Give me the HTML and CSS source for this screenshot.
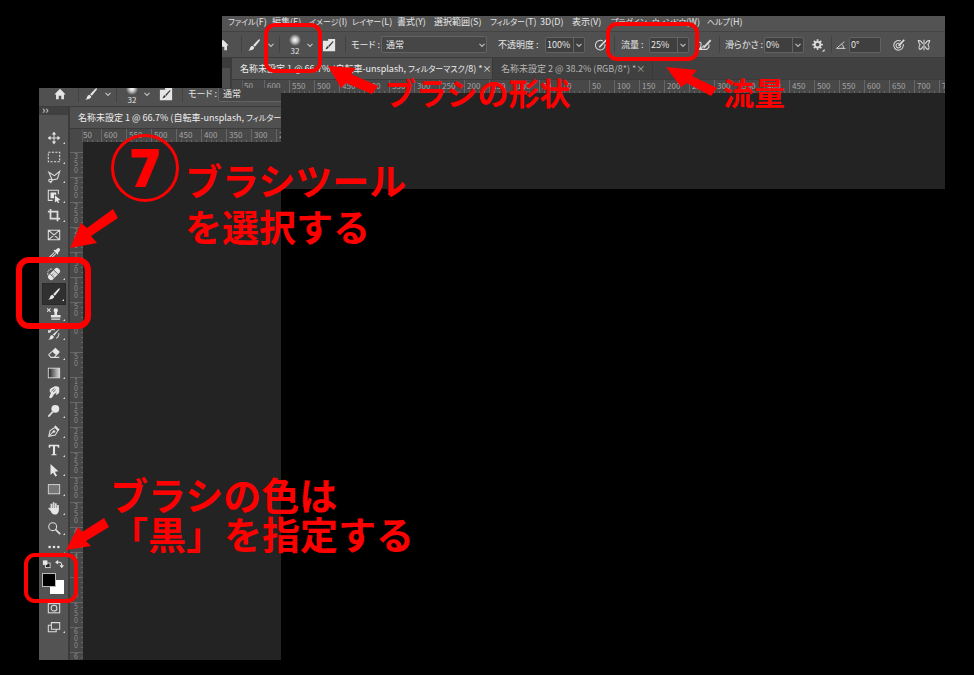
FILE: index.html
```html
<!DOCTYPE html>
<html lang="ja">
<head>
<meta charset="utf-8">
<title>ブラシツールの設定</title>
<link rel="stylesheet" href="styles.css">
</head>
<body>
<svg class="defs" aria-hidden="true">
  <linearGradient id="fade"><stop offset="0" stop-color="#222"/><stop offset="1" stop-color="#ddd"/></linearGradient>
  <radialGradient id="soft"><stop offset="0" stop-color="#fff"/><stop offset=".4" stop-color="#ccc"/><stop offset="1" stop-color="#535353"/></radialGradient>
  <symbol id="home" viewBox="0 0 16 16"><path class="f" d="M8 2 1.500 8.500H3.500V14H6.500V10H9.500V14H12.500V8.500H14.500Z"/></symbol>
  <symbol id="brush" viewBox="0 0 16 16"><path class="f" d="M14.500 1.500Q15.200 2.300 14 3.800L9 10 7 8.200 13 2Q14 1 14.500 1.500ZM6.300 8.800 8.300 10.800Q7.800 14 1.500 14.500 3.200 13 3.500 11.300 4 9 6.300 8.800Z"/></symbol>
  <symbol id="chev" viewBox="0 0 8 8"><path class="s" d="M1.500 2.800 4 5.300 6.500 2.800"/></symbol>
  <symbol id="preset" viewBox="0 0 16 16"><path class="f" d="M1 3H7V1H15V15H1Z"/><path fill="#333" d="M12.500 3.500 13.200 4.300 8.200 10.200 7 9ZM6.500 9.500 7.700 10.800Q6.500 13 3.500 12.800 4.800 12 5 10.800 5.400 9.600 6.500 9.500Z"/></symbol>
  <symbol id="target" viewBox="0 0 16 16"><path class="s" d="M10 3.500A5.500 5.500 0 1 0 12.800 7"/><path class="s" d="M8.500 6.200A2.700 2.700 0 1 0 10 8.500"/><path class="s w" d="M7.500 9 14 2"/></symbol>
  <symbol id="penpress" viewBox="0 0 16 16"><path class="s" d="M10 3.500A5.500 5.500 0 1 0 12.500 7"/><path class="s w" d="M6.500 10 14.500 2"/><path class="f" d="M5.500 11 6.200 8.800 7.800 10.200Z"/></symbol>
  <symbol id="air" viewBox="0 0 16 16"><path class="s" d="M1.500 5Q4 4.500 3.500 8T1.500 13H4M7 8.500 2.500 13H10L12.500 10.500V7"/><path class="s w" d="M6.500 11 14.500 2.500"/></symbol>
  <symbol id="gear" viewBox="0 0 16 16"><circle class="s w" cx="7.500" cy="7.500" r="3.200"/><path class="s w" d="M7.500 1.500V4M7.500 11V13.500M1.500 7.500H4M11 7.500H13.500M3.300 3.300 5 5M10 10 11.700 11.700M3.300 11.700 5 10M10 5 11.700 3.300"/><path class="f" d="M15.500 12.500V15.500H12.500Z"/></symbol>
  <symbol id="angle" viewBox="0 0 16 16"><path class="s" d="M12.500 3.500 2 12.500H14M9 7Q12 9 11 12.500"/></symbol>
  <symbol id="fly" viewBox="0 0 16 16"><path class="s" d="M8 2V14M6.500 6.500Q4.500 2.500 1.500 3 2 6 3.500 7.500 1.500 9.500 2.500 12.500 5.500 13.500 6.500 9.500M9.500 6.500Q11.500 2.500 14.500 3 14 6 12.500 7.500 14.500 9.500 13.500 12.500 10.500 13.500 9.500 9.500"/></symbol>
  <symbol id="move" viewBox="0 0 16 16"><path class="s" d="M8 2V14M2 8H14"/><path class="f" d="M8 .8 10.500 4H5.500ZM8 15.200 10.500 12H5.500ZM.8 8 4 5.500V10.500ZM15.200 8 12 5.500V10.500Z"/></symbol>
  <symbol id="marquee" viewBox="0 0 16 16"><rect class="s" x="1.500" y="2.500" width="13" height="11" stroke-dasharray="2.500 1.500"/></symbol>
  <symbol id="lasso" viewBox="0 0 16 16"><path class="s" d="M2 2.500 8.500 6.500 14.500 1.500 12 10 6 11.500ZM6 11.500Q2 9.500 2 12T5.500 12.500L4 15"/></symbol>
  <symbol id="object" viewBox="0 0 16 16"><path class="s" d="M6.500 13H1.500V1.500H13V6"/><path class="f" d="M4 4H10.500V7L8 6V10.500H4ZM9 7 15.500 12.500 12.500 13 14 15.500 12.500 16 11 13.800 9 15.500Z"/></symbol>
  <symbol id="crop" viewBox="0 0 16 16"><path class="s w" d="M4 1V12H15M1 4H12V15"/></symbol>
  <symbol id="frame" viewBox="0 0 16 16"><path class="s" d="M1.500 2.500H14.500V13.500H1.500ZM1.500 2.500 14.500 13.500M14.500 2.500 1.500 13.500"/></symbol>
  <symbol id="dropper" viewBox="0 0 16 16"><path class="f" d="M10 3.500 12 1.500Q13.500.800 14.500 2T14.500 4.500L12.500 6.500 13 7.500 12 8.500 7.500 4 8.500 3Z"/><path class="s" d="M8.500 6 3 11.500 2 14 4.500 13 10 7.500"/></symbol>
  <symbol id="heal" viewBox="0 0 16 16"><path class="s" stroke-dasharray="1.500 1" d="M1 9Q0 3 6 2"/><g transform="rotate(-45 8 8)"><rect class="f" x="0" y="4.500" width="16" height="7" rx="3"/><path stroke="#535353" d="M5 4.500V11.500M11 4.500V11.500"/><path stroke="#535353" stroke-dasharray="1 1" d="M6 7H10M6 9H10"/></g></symbol>
  <symbol id="stamp" viewBox="0 0 16 16"><path class="s" d="M0 1.500 4 5.500M4 1.500 0 5.500"/><path class="f" d="M10 1.500A2.500 2.500 0 0 1 11.500 6V9H15.500V12H4.500V9H8.500V6A2.500 2.500 0 0 1 10 1.500ZM5 13H15V14.500H5Z"/></symbol>
  <symbol id="history" viewBox="0 0 16 16"><path class="s" d="M9 3.500Q5 1.500 3 5M13.500 7Q14 11 10.500 13"/><path class="f" d="M1 3 1.500 7 5 5.500ZM15 1.500 8.500 10 6.500 8.500ZM6 9 8 11Q7 14.500 1.500 14.500 3.500 13 3.500 11 4 9 6 9Z"/></symbol>
  <symbol id="eraser" viewBox="0 0 16 16"><path class="f" d="M9.500 2 14.500 6.500 10.500 10.500 5.500 6Z"/><path class="s" d="M5.500 6.500 2 10 4.500 13H8L14 7M8 13H14"/></symbol>
  <symbol id="gradient" viewBox="0 0 16 16"><rect x="1.500" y="2.500" width="13" height="11" fill="url(#fade)" stroke="#ddd"/></symbol>
  <symbol id="smudge" viewBox="0 0 16 16"><path class="f" d="M2.500 14 4.500 9 3 7Q2.500 4.500 5 3.500L9 1.500Q14 1 14 4V8Q13.500 11 10 11.500L11 8.500 8 10.500 6 14Q4 16 2.500 14Z"/><path stroke="#535353" fill="none" d="M5 7 8.500 4M7 8 10 5.500"/></symbol>
  <symbol id="dodge" viewBox="0 0 16 16"><circle class="f" cx="9.500" cy="5.500" r="4.500"/><path class="s w" d="M6.500 9 1.500 14.500"/></symbol>
  <symbol id="pen" viewBox="0 0 16 16"><path class="s" d="M2 14 3.500 7.500 9 4 12.500 7.500 9.500 12.500ZM2 14 7 9"/><circle class="f" cx="8" cy="8.500" r="1.500"/><path class="f" d="M9.500 1.500 14.500 6.500 13 8 8.500 3Z"/></symbol>
  <symbol id="type" viewBox="0 0 16 16"><path class="f" d="M2 2H14V5.500H12.500L12 3.800H9.200V12.500L11 13V14H5V13L6.800 12.500V3.800H4L3.500 5.500H2Z"/></symbol>
  <symbol id="arrow" viewBox="0 0 16 16"><path class="f" d="M4 1 13 9.500 9 10 11.500 14.500 9.500 15.500 7 11 4 13.500Z"/></symbol>
  <symbol id="shape" viewBox="0 0 16 16"><rect x="1.500" y="3" width="13" height="10.500" fill="#777" stroke="#ddd"/></symbol>
  <symbol id="hand" viewBox="0 0 16 16"><path class="s w" d="M5 9V3M7.500 8V1.500M10 8V2.500M12.500 9V4.500M5 11 2 8"/><path class="f" d="M4 8H13.500V11Q12.500 15.500 9 15.500T4.500 12Z"/></symbol>
  <symbol id="loupe" viewBox="0 0 16 16"><circle class="s" cx="6.500" cy="6.500" r="4.500"/><path class="s w" stroke-linecap="round" d="M10 10 14.500 14.500"/></symbol>
  <symbol id="dots" viewBox="0 0 16 16"><circle class="f" cx="3" cy="8" r="1.500"/><circle class="f" cx="8" cy="8" r="1.500"/><circle class="f" cx="13" cy="8" r="1.500"/></symbol>
  <symbol id="mask" viewBox="0 0 16 16"><rect class="s" x="1.500" y="3" width="13" height="10.500"/><circle class="s" cx="8" cy="8.200" r="3.300"/></symbol>
  <symbol id="screen" viewBox="0 0 16 16"><path class="s" d="M5 6H1.500V13.500H10.500V11M5 3H14.500V10.500H5Z"/></symbol>
  <symbol id="mini" viewBox="0 0 10 10"><rect x="4" y="4" width="5" height="5" fill="#222" stroke="#ddd"/><rect class="f" x="1" y="1" width="5" height="5"/></symbol>
  <symbol id="swap" viewBox="0 0 10 10"><path class="s" d="M3 3H5Q7.500 3 7.500 7"/><path class="f" d="M0 3 3.500 .5V5.500ZM5 6.500H10L7.500 9.800Z"/></symbol>
</svg>

<main class="board">
  <section class="panel wide" aria-label="オプションバー">
    <nav class="menu">
      <a href="#"><span class="kana">ファイル</span>(F)</a><a href="#">編集(E)</a><a href="#"><span class="kana">イメージ</span>(I)</a><a href="#"><span class="kana">レイヤー</span>(L)</a><a href="#">書式(Y)</a><a href="#">選択範囲(S)</a><a href="#"><span class="kana">フィルター</span>(T)</a><a href="#">3D(D)</a><a href="#">表示(V)</a><a href="#"><span class="kana">プラグイン</span></a><a href="#"><span class="kana">ウィンドウ</span>(W)</a><a href="#"><span class="kana">ヘルプ</span>(H)</a>
    </nav>
    <div class="options">
      <div class="group g-home"><button aria-label="ホーム"><svg><use href="#home"/></svg></button></div>
      <div class="group g-brush"><button aria-label="ブラシ"><svg><use href="#brush"/></svg></button><svg class="chev"><use href="#chev"/></svg></div>
      <div class="group g-size"><button class="tip" aria-label="ブラシサイズ"><svg viewBox="0 0 14 14"><circle cx="7" cy="7" r="7" fill="url(#soft)"/></svg><span>32</span></button><svg class="chev"><use href="#chev"/></svg><button aria-label="ブラシ設定"><svg><use href="#preset"/></svg></button></div>
      <div class="group g-mode"><label for="mode">モード :</label><span class="pick"><select id="mode"><option>通常</option></select><svg class="chev"><use href="#chev"/></svg></span><label class="opacity" for="opacity">不透明度 :</label><span class="field"><input id="opacity" value="100%"><button aria-label="不透明度を開く"><svg class="chev"><use href="#chev"/></svg></button></span><button aria-label="筆圧で不透明度"><svg><use href="#penpress"/></svg></button></div>
      <div class="group g-flow"><label for="flow">流量 :</label><span class="field"><input id="flow" value="25%"><button aria-label="流量を開く"><svg class="chev"><use href="#chev"/></svg></button></span><button aria-label="エアブラシ"><svg><use href="#air"/></svg></button></div>
      <div class="group g-smooth"><label for="smooth">滑らかさ :</label><span class="field"><input id="smooth" value="0%"><button aria-label="滑らかさを開く"><svg class="chev"><use href="#chev"/></svg></button></span><button aria-label="滑らかさの設定"><svg><use href="#gear"/></svg></button></div>
      <div class="group g-angle"><label for="angle-in" aria-label="角度"><svg class="small"><use href="#angle"/></svg></label><span class="field plain"><input id="angle-in" value="0°"></span><button aria-label="筆圧でサイズ"><svg><use href="#target"/></svg></button><button aria-label="対称"><svg><use href="#fly"/></svg></button></div>
    </div>
    <div class="work">
      <div class="edge"></div>
      <div class="doc">
        <div class="tabs">
          <div class="tab first on"><span>名称未設定 1 @ 66.7% (自転車-unsplash, <span class="kana">フィルターマスク</span>/8) *</span><button aria-label="閉じる">×</button></div>
          <div class="tab"><span>名称未設定 2 @ 38.2% (RGB/8*) *</span><button aria-label="閉じる">×</button></div>
        </div>
        <div class="ruler"><i class="corner"></i><b class="cut">50</b><b>600</b><b>550</b><b>500</b><b>450</b><b>400</b><b>350</b><b>300</b><b>250</b><b>200</b><b>150</b><b>100</b><b>50</b><b>0</b><b>50</b><b>100</b><b>150</b><b>200</b><b>250</b><b>300</b><b>350</b><b>400</b><b>450</b><b>500</b><b>550</b><b>600</b><b>650</b><b>700</b><b>7</b></div>
        <div class="canvas"></div>
      </div>
    </div>
  </section>

  <section class="panel tall" aria-label="ツールバー">
    <div class="options">
      <div class="group g-home"><button aria-label="ホーム"><svg><use href="#home"/></svg></button></div>
      <div class="group g-brush"><button aria-label="ブラシ"><svg><use href="#brush"/></svg></button><svg class="chev"><use href="#chev"/></svg></div>
      <div class="group g-size"><button class="tip" aria-label="ブラシサイズ"><svg viewBox="0 0 14 14"><circle cx="7" cy="7" r="7" fill="url(#soft)"/></svg><span>32</span></button><svg class="chev"><use href="#chev"/></svg><button aria-label="ブラシ設定"><svg><use href="#preset"/></svg></button></div>
      <div class="group g-mode"><label for="mode2">モード :</label><span class="pick"><select id="mode2"><option>通常</option></select></span></div>
    </div>
    <div class="work">
      <aside class="tools">
        <div class="head">››</div>
        <div class="list">
          <button aria-label="移動"><svg><use href="#move"/></svg></button>
          <button aria-label="長方形選択"><svg><use href="#marquee"/></svg></button>
          <button aria-label="多角形選択"><svg><use href="#lasso"/></svg></button>
          <button aria-label="オブジェクト選択"><svg><use href="#object"/></svg></button>
          <button aria-label="切り抜き"><svg><use href="#crop"/></svg></button>
          <button class="single" aria-label="フレーム"><svg><use href="#frame"/></svg></button>
          <button aria-label="スポイト"><svg><use href="#dropper"/></svg></button>
          <button aria-label="修復ブラシ"><svg><use href="#heal"/></svg></button>
          <button class="on" aria-label="ブラシ"><svg><use href="#brush"/></svg></button>
          <button aria-label="スタンプ"><svg><use href="#stamp"/></svg></button>
          <button aria-label="ヒストリーブラシ"><svg><use href="#history"/></svg></button>
          <button aria-label="消しゴム"><svg><use href="#eraser"/></svg></button>
          <button aria-label="グラデーション"><svg><use href="#gradient"/></svg></button>
          <button aria-label="指先"><svg><use href="#smudge"/></svg></button>
          <button aria-label="覆い焼き"><svg><use href="#dodge"/></svg></button>
          <button aria-label="ペン"><svg><use href="#pen"/></svg></button>
          <button aria-label="文字"><svg><use href="#type"/></svg></button>
          <button aria-label="パス選択"><svg><use href="#arrow"/></svg></button>
          <button aria-label="長方形"><svg><use href="#shape"/></svg></button>
          <button aria-label="手のひら"><svg><use href="#hand"/></svg></button>
          <button aria-label="ズーム"><svg><use href="#loupe"/></svg></button>
          <button aria-label="その他"><svg><use href="#dots"/></svg></button>
        </div>
        <div class="colors">
          <button aria-label="初期設定の色"><svg><use href="#mini"/></svg></button><button aria-label="色の入れ替え"><svg><use href="#swap"/></svg></button>
        </div>
        <div class="swatches"><i class="bg"></i><i class="fg"></i></div>
        <div class="modes">
          <button class="single" aria-label="クイックマスク"><svg><use href="#mask"/></svg></button>
          <button aria-label="スクリーンモード"><svg><use href="#screen"/></svg></button>
        </div>
      </aside>
      <div class="doc">
        <div class="tabs"><div class="tab only on"><span>名称未設定 1 @ 66.7% (自転車-unsplash, <span class="kana">フィルターマ</span></span></div></div>
        <div class="ruler"><i class="corner"></i><b class="cut">50</b><b>600</b><b>550</b><b>500</b><b>450</b><b>400</b><b>350</b><b>300</b><b>2</b></div>
        <div class="area">
          <div class="vruler"><b>350</b><b>300</b><b>250</b><b>200</b><b>150</b><b>100</b><b>50</b><b>0</b><b>50</b><b>100</b><b>150</b><b>200</b><b>250</b><b>300</b><b>350</b><b>400</b><b>450</b><b>500</b><b>550</b><b>600</b><b>6</b></div>
          <div class="canvas"></div>
        </div>
      </div>
    </div>
  </section>

  <div class="ring ring-size"></div>
  <div class="ring ring-flow"></div>
  <div class="ring ring-tool"></div>
  <div class="ring ring-color"></div>
  <svg class="arrows" viewBox="0 0 974 675" aria-hidden="true">
    <path d="M328 66 356 68 351 74 378 86 372 94 346 83 341 88Z"/>
    <path d="M666 67 697 70 692 76 717 88 711 96 687 83 681 87Z"/>
    <path d="M70 248 81 223 87 228 113 209 118 218 91 236 97 243Z"/>
    <path d="M66 550 78 527 82 532 104 518 109 527 86 541 91 546Z"/>
  </svg>
  <div class="note n-shape">ブラシの形状</div>
  <div class="note n-flow">流量</div>
  <div class="step">7</div>
  <div class="note n-tool">ブラシツール<br>を選択する</div>
  <div class="note n-color">ブラシの色は<br>「黒」を指定する</div>
</main>
</body>
</html>
```
FILE: styles.css
```css
* { box-sizing: border-box; }
body {
  margin: 0;
  background: #000;
  color: #e6e6e6;
  font: 9px/12px "Noto Sans CJK JP", sans-serif;
  font-feature-settings: "palt";
}
button, input, select {
  margin: 0; padding: 0; border: 0; background: none;
  color: inherit; font: inherit; font-feature-settings: inherit;
}
button { display: flex; align-items: center; justify-content: center; }
a { color: inherit; text-decoration: none; }
svg { display: block; width: 14px; height: 14px; flex: none; }
.defs { position: absolute; width: 0; height: 0; }
.f { fill: #e6e6e6; }
.s { fill: none; stroke: #ddd; stroke-width: 1.2; }
.s.w { stroke-width: 2; }
.kana { font-size: 8px; }

.board { position: relative; min-height: 100vh; overflow: hidden; }
.panel { position: absolute; display: flex; flex-direction: column; overflow: hidden; background: #535353; }
.wide { left: 222px; right: 29px; top: 16px; height: 173px; }
.tall { left: 39px; width: 242px; top: 88px; bottom: 15px; }

.menu {
  display: grid;
  grid-template-columns: 44px 37px 43px 45px 37px 56px 50px 32px 39px 41px 55px auto;
  height: 15px; padding-left: 6px; flex: none;
  white-space: nowrap;
}

.options {
  display: flex; flex: none;
  height: 27px;
  background: #505050;
  border-top: 1px solid #434343;
  border-bottom: 1px solid #3c3c3c;
  white-space: nowrap;
}
.wide .options { margin-left: -20px; }
.tall .options { margin-top: -8px; }
.group { position: relative; display: flex; align-items: center; flex: none; }
.group + .group::before {
  content: ""; position: absolute; left: 0; top: 4px; bottom: 4px;
  border-left: 1px solid #424242;
}
.options svg.chev { width: 8px; height: 8px; opacity: .8; }
.options svg.small { width: 12px; height: 12px; }
.g-home { width: 39px; justify-content: center; padding-left: 3px; }
.g-brush { width: 38px; padding-left: 6px; gap: 6px; }
.g-size { width: 66px; padding-left: 9px; gap: 4px; }
.g-size .chev { margin-right: 4px; }
.tip { flex-direction: column; width: 14px; }
.tip svg { width: 12px; height: 12px; }
.tip span { line-height: 10px; font-size: 8px; }
.g-mode { width: 269px; padding-left: 6px; }
.g-mode label { width: 30px; }
.g-mode .opacity { width: 47px; margin-left: 11px; }
.pick { position: relative; }
.pick select {
  appearance: none; display: block;
  width: 106px; height: 17px; padding-left: 4px;
  background: #464646; border: 1px solid #636363; border-radius: 2px;
}
.pick .chev { position: absolute; right: 1px; top: 5px; }
.field {
  display: flex; width: 40px; height: 16px;
  background: #3f3f3f; border: 1px solid #636363; border-radius: 2px;
}
.field input { width: 28px; padding-left: 1px; border-right: 1px solid #636363; }
.field button { flex: 1; }
.field.plain { width: 32px; }
.field.plain input { border: 0; }
.g-mode > button { margin-left: 9px; }
.g-flow { width: 105px; padding-left: 7px; }
.g-flow label { width: 28px; }
.g-flow > button { margin-left: 9px; }
.g-smooth { width: 112px; padding-left: 6px; }
.g-smooth label { width: 39px; }
.g-smooth > button { margin-left: 7px; }
.g-angle { padding-left: 4px; }
.g-angle label { width: 14px; }
.g-angle > button { margin-left: 11px; }

.work { display: flex; flex: 1; min-height: 0; }
.edge { width: 10px; flex: none; border-top: 10px solid #3b3b3b; border-right: 2px solid #3b3b3b; background: #4d4d4d; }
.doc { display: flex; flex-direction: column; flex: 1; min-width: 0; }
.tabs { display: flex; flex: none; height: 21px; background: #404040; white-space: nowrap; }
.tab { display: flex; align-items: center; justify-content: space-between; flex: none; width: 160px; padding: 0 8px; color: #b4b4b4; border-right: 1px solid #383838; }
.tab.on { background: #505050; color: #eee; }
.tab.first, .tab.only { width: 261px; }
.ruler { display: flex; flex: none; height: 14px; background: #484848; border-top: 1px solid #3b3b3b; overflow: hidden; color: #a5a5a5; }
.ruler b, .vruler b { font-weight: 400; font-size: 8px; flex: none; }
.ruler b {
  width: 25px; padding-left: 2px; line-height: 12px;
  border-left: 1px solid #666;
  background: repeating-linear-gradient(90deg, transparent 0 4px, #666 4px 5px) bottom / 100% 2px no-repeat;
}
.ruler .corner { width: 11px; flex: none; border-right: 1px solid #5a5a5a; }
.ruler .cut { width: 21px; padding-left: 1px; border: 0; }
.tall .ruler .corner { width: 13px; }
.tall .ruler .cut { width: 18px; padding-left: 0; }
.canvas { flex: 1; background: #232323; }
.area { display: flex; flex: 1; min-height: 0; }
.vruler {
  display: flex; flex-direction: column; flex: none;
  width: 13px; padding-top: 10px; overflow: hidden;
  background: #484848; color: #8e8e8e;
}
.vruler b {
  flex: 0 0 25px; padding: 0 4px; border-top: 1px solid #666;
  line-height: 7px; font-size: 7px; overflow-wrap: anywhere;
  background: repeating-linear-gradient(transparent 0 4px, #666 4px 5px) right / 2px 100% no-repeat;
}

.tools { width: 31px; flex: none; border-right: 2px solid #3b3b3b; }
.head { height: 8px; padding-left: 3px; background: #404040; font-size: 11px; line-height: 5px; }
.list { display: flex; flex-direction: column; height: 429px; margin-top: 13px; }
.list button { flex: 1; }
.list button, .modes button { position: relative; width: 24px; margin-left: 3px; }
.list button::after, .modes button::after {
  content: ""; position: absolute; right: 1px; bottom: 3px;
  border: 1px solid; border-color: transparent #ddd #ddd transparent;
}
.list .single::after, .modes .single::after { content: none; }
.list .on { background: #303030; border: 1px solid #292929; }
.colors { display: flex; gap: 4px; padding: 2px 0 0 3px; }
.colors svg { width: 9px; height: 10px; }
.swatches { position: relative; height: 25px; margin-top: 4px; }
.swatches i { position: absolute; width: 14px; height: 14px; }
.fg { left: 3px; top: 0; background: #000; border: 1px solid #bbb; }
.bg { left: 11px; top: 7px; background: #fff; }
.modes { display: flex; flex-direction: column; }
.modes button { height: 19px; }

.ring { position: absolute; border: 4px solid #f00; border-radius: 11px; }
.ring-size { left: 264px; top: 23px; width: 58px; height: 50px; }
.ring-flow { left: 606px; top: 22px; width: 93px; height: 39px; }
.ring-tool { left: 16px; top: 257px; width: 75px; height: 72px; border-width: 6px; border-radius: 13px; }
.ring-color { left: 24px; top: 553px; width: 54px; height: 50px; }
.arrows { position: absolute; left: 0; top: 0; width: 974px; height: 675px; fill: #f00; pointer-events: none; }
.note {
  position: absolute; color: #f00; white-space: nowrap;
  font: 700 37px/46px "Noto Sans CJK JP", sans-serif;
  font-feature-settings: normal;
}
.n-shape { left: 385px; top: 69px; font-size: 31px; }
.n-flow { left: 723px; top: 69px; font-size: 31px; }
.n-tool { left: 185px; top: 157px; }
.n-color { left: 110px; top: 474px; font-size: 38px; line-height: 39px; }
.step {
  position: absolute; left: 111px; top: 134px; width: 68px; height: 68px;
  border: 3px solid #f00; border-radius: 50%;
  color: #f00; text-align: center;
  font: 800 53px/60px "Open Sans", sans-serif;
}
```
